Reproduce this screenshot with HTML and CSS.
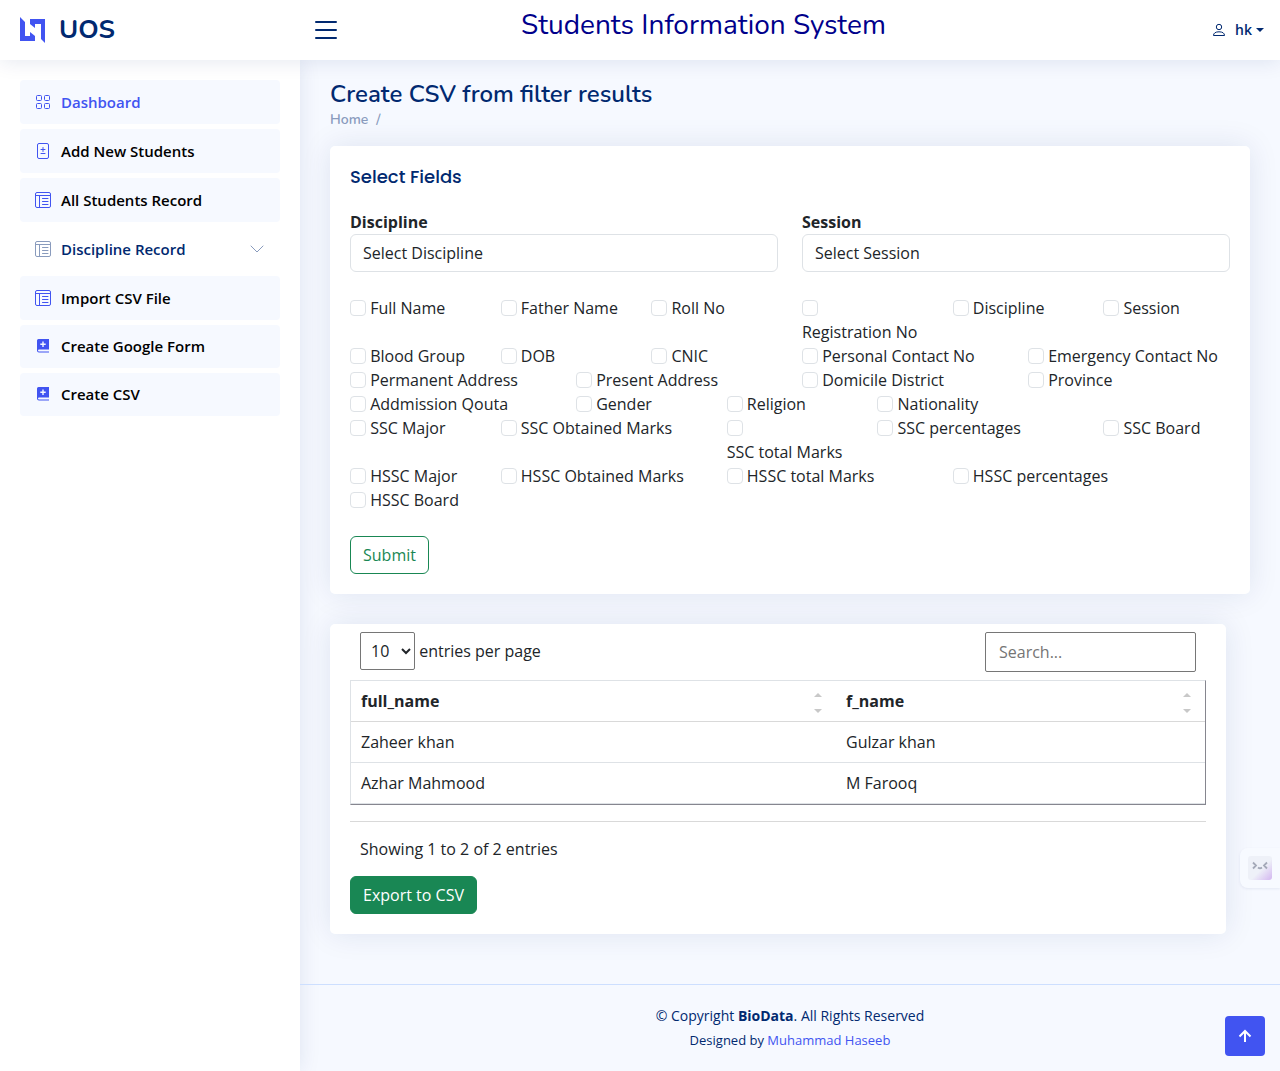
FILE: index.html
```html
<!DOCTYPE html>
<html lang="en">
<head>
<meta charset="utf-8">
<meta name="viewport" content="width=device-width, initial-scale=1">
<title>Students Information System</title>
<link rel="stylesheet" href="styles.css">
</head>
<body>
<svg class="sprite" aria-hidden="true">
  <symbol id="icon-window" viewBox="0 0 16 16">
    <rect x="0.5" y="0.5" width="15" height="15" rx="1.5" fill="none" stroke="currentColor"/>
    <path d="M0.5 3.5h15M4.5 3.5v12" fill="none" stroke="currentColor"/>
    <path d="M7.5 6.5h5.500M7.500 9.500h5.500M7.500 12.500h5.500" fill="none" stroke="currentColor" stroke-linecap="round"/>
  </symbol>
  <symbol id="icon-grid" viewBox="0 0 16 16">
    <g fill="none" stroke="currentColor"><rect x="1.500" y="1.500" width="5" height="5" rx="1"/><rect x="9.500" y="1.500" width="5" height="5" rx="1"/><rect x="1.500" y="9.500" width="5" height="5" rx="1"/><rect x="9.500" y="9.500" width="5" height="5" rx="1"/></g>
  </symbol>
  <symbol id="icon-file-diff" viewBox="0 0 16 16">
    <rect x="2.500" y="0.500" width="11" height="15" rx="1.500" fill="none" stroke="currentColor"/>
    <path d="M8 4.500v4M6 6.500h4M6 10.500h4" fill="none" stroke="currentColor" stroke-linecap="round"/>
  </symbol>
  <symbol id="icon-book-plus" viewBox="0 0 16 16">
    <path fill="currentColor" fill-rule="evenodd" d="M3.500 1H14v10.500H4a1 1 0 0 0 0 2h10v1H4a2 2 0 0 1-2-2v-10A1.500 1.500 0 0 1 3.500 1zM7.300 3.500v2h-2v1.400h2v2h1.400v-2h2v-1.400h-2v-2z"/>
  </symbol>
</svg>

<header class="header">
  <a class="brand" href="#">
    <svg class="brand-mark" viewBox="0 0 25 26" aria-hidden="true"><path fill="#4154f1" d="M0 0l5 5v14h5v-4l5 4v5H0zM10 2h15v24l-4-4V7h-6v4l-5-4z"/></svg>
    <span>UOS</span>
  </a>
  <button class="menu-toggle" type="button" aria-label="Toggle sidebar">
    <svg viewBox="0 0 22 18" aria-hidden="true"><path d="M1 1h20M1 9h20M1 17h20" stroke="currentColor" stroke-width="2" stroke-linecap="round"/></svg>
  </button>
  <div class="site-title">Students Information System</div>
  <a class="profile" href="#">
    <svg class="profile-icon" viewBox="0 0 14 14" aria-hidden="true"><g fill="none" stroke="currentColor"><circle cx="7" cy="4" r="2.700"/><path d="M1.500 12.500c0-2.400 2-3.700 5.500-3.700s5.500 1.300 5.500 3.700z" stroke-linejoin="round"/></g></svg>
    <span>hk</span>
    <span class="caret"></span>
  </a>
</header>

<div class="shell">
  <aside class="sidebar">
    <nav class="side-nav">
      <a class="side-link active" href="#"><svg class="icon"><use href="#icon-grid"/></svg>Dashboard</a>
      <a class="side-link" href="#"><svg class="icon"><use href="#icon-file-diff"/></svg>Add New Students</a>
      <a class="side-link" href="#"><svg class="icon"><use href="#icon-window"/></svg>All Students Record</a>
      <a class="side-link collapsed" href="#"><svg class="icon"><use href="#icon-window"/></svg>Discipline Record
        <svg class="chevron" viewBox="0 0 16 16" aria-hidden="true"><path d="M2 5l6 6 6-6" fill="none" stroke="currentColor" stroke-linecap="round" stroke-linejoin="round"/></svg></a>
      <a class="side-link" href="#"><svg class="icon"><use href="#icon-window"/></svg>Import CSV File</a>
      <a class="side-link compact" href="#"><svg class="icon"><use href="#icon-book-plus"/></svg>Create Google Form</a>
      <a class="side-link compact" href="#"><svg class="icon"><use href="#icon-book-plus"/></svg>Create CSV</a>
    </nav>
  </aside>

  <div class="page">
    <main class="main">
      <div class="page-title">
        <h1>Create CSV from filter results</h1>
        <nav class="breadcrumb"><a href="#">Home</a><span>/</span></nav>
      </div>

      <section class="card">
        <h2 class="card-title">Select Fields</h2>
        <form>
          <div class="row filters">
            <div class="col-6">
              <label class="field-label" for="discipline">Discipline</label>
              <select class="form-control" id="discipline"><option>Select Discipline</option></select>
            </div>
            <div class="col-6">
              <label class="field-label" for="session">Session</label>
              <select class="form-control" id="session"><option>Select Session</option></select>
            </div>
          </div>
          <div class="row">
            <div class="col-2"><input type="checkbox" id="f1"> <label for="f1">Full Name</label></div>
            <div class="col-2"><input type="checkbox" id="f2"> <label for="f2">Father Name</label></div>
            <div class="col-2"><input type="checkbox" id="f3"> <label for="f3">Roll No</label></div>
            <div class="col-2"><input type="checkbox" id="f4"> <label for="f4">Registration No</label></div>
            <div class="col-2"><input type="checkbox" id="f5"> <label for="f5">Discipline</label></div>
            <div class="col-2"><input type="checkbox" id="f6"> <label for="f6">Session</label></div>
          </div>
          <div class="row">
            <div class="col-2"><input type="checkbox" id="f7"> <label for="f7">Blood Group</label></div>
            <div class="col-2"><input type="checkbox" id="f8"> <label for="f8">DOB</label></div>
            <div class="col-2"><input type="checkbox" id="f9"> <label for="f9">CNIC</label></div>
            <div class="col-3"><input type="checkbox" id="f10"> <label for="f10">Personal Contact No</label></div>
            <div class="col-3"><input type="checkbox" id="f11"> <label for="f11">Emergency Contact No</label></div>
          </div>
          <div class="row">
            <div class="col-3"><input type="checkbox" id="f12"> <label for="f12">Permanent Address</label></div>
            <div class="col-3"><input type="checkbox" id="f13"> <label for="f13">Present Address</label></div>
            <div class="col-3"><input type="checkbox" id="f14"> <label for="f14">Domicile District</label></div>
            <div class="col-3"><input type="checkbox" id="f15"> <label for="f15">Province</label></div>
          </div>
          <div class="row">
            <div class="col-3"><input type="checkbox" id="f16"> <label for="f16">Addmission Qouta</label></div>
            <div class="col-2"><input type="checkbox" id="f17"> <label for="f17">Gender</label></div>
            <div class="col-2"><input type="checkbox" id="f18"> <label for="f18">Religion</label></div>
            <div class="col-2"><input type="checkbox" id="f19"> <label for="f19">Nationality</label></div>
          </div>
          <div class="row">
            <div class="col-2"><input type="checkbox" id="f20"> <label for="f20">SSC Major</label></div>
            <div class="col-3"><input type="checkbox" id="f21"> <label for="f21">SSC Obtained Marks</label></div>
            <div class="col-2"><input type="checkbox" id="f22"> <label for="f22">SSC total Marks</label></div>
            <div class="col-3"><input type="checkbox" id="f23"> <label for="f23">SSC percentages</label></div>
            <div class="col-2"><input type="checkbox" id="f24"> <label for="f24">SSC Board</label></div>
          </div>
          <div class="row">
            <div class="col-2"><input type="checkbox" id="f25"> <label for="f25">HSSC Major</label></div>
            <div class="col-3"><input type="checkbox" id="f26"> <label for="f26">HSSC Obtained Marks</label></div>
            <div class="col-3"><input type="checkbox" id="f27"> <label for="f27">HSSC total Marks</label></div>
            <div class="col-3"><input type="checkbox" id="f28"> <label for="f28">HSSC percentages</label></div>
            <div class="col-2"><input type="checkbox" id="f29"> <label for="f29">HSSC Board</label></div>
          </div>
          <button class="btn btn-outline" type="submit">Submit</button>
        </form>
      </section>

      <section class="card results">
        <div class="table-top">
          <label class="per-page"><select class="per-page-select"><option>10</option></select> entries per page</label>
          <input class="search" type="search" placeholder="Search..." aria-label="Search">
        </div>
        <div class="table-wrap">
          <table class="data-table">
            <thead>
              <tr>
                <th class="name-col"><a class="sorter" href="#">full_name<span class="sort-arrows"></span></a></th>
                <th><a class="sorter" href="#">f_name<span class="sort-arrows"></span></a></th>
              </tr>
            </thead>
            <tbody>
              <tr><td>Zaheer khan</td><td>Gulzar khan</td></tr>
              <tr><td>Azhar Mahmood</td><td>M Farooq</td></tr>
            </tbody>
          </table>
        </div>
        <div class="table-info">Showing 1 to 2 of 2 entries</div>
        <button class="btn btn-success" type="button">Export to CSV</button>
      </section>
    </main>

    <footer class="footer">
      <div class="copyright">© Copyright <strong>BioData</strong>. All Rights Reserved</div>
      <div class="credits">Designed by <a href="#">Muhammad Haseeb</a></div>
    </footer>
  </div>
</div>

<div class="assistant" aria-hidden="true">
  <div class="assistant-face">
    <svg viewBox="0 0 24 24"><path d="M5 6.500l3 3-3 3M19 6.500l-3 3 3 3M10 11.500q2 1.500 4 0" fill="none" stroke="#a4a9b8" stroke-width="1.800"/></svg>
  </div>
</div>
<a class="back-to-top" href="#" aria-label="Back to top">
  <svg viewBox="0 0 24 24" aria-hidden="true"><path d="M12 18V7M6.500 12.500L12 7l5.500 5.500" fill="none" stroke="#fff" stroke-width="2"/></svg>
</a>
</body>
</html>
```
FILE: styles.css
```css
* { box-sizing: border-box; }

body {
  margin: 0;
  background: #f6f9ff;
  color: #212529;
  font: 400 16px/24px "Open Sans", "Noto Sans", sans-serif;
}

a { color: #4154f1; text-decoration: none; }
h1, h2 { margin: 0; }
.sprite { display: none; }

/* Header */
.header {
  position: sticky;
  top: 0;
  z-index: 3;
  display: flex;
  align-items: center;
  height: 60px;
  padding: 0 16px 0 20px;
  background: #fff;
  box-shadow: 0 2px 20px rgba(1, 41, 112, 0.1);
}
.brand {
  display: flex;
  align-items: center;
  gap: 14px;
  width: 295px;
  color: #012970;
  font: 700 26px/32px Nunito, Lato, sans-serif;
}
.brand-mark { width: 25px; height: 26px; }
.menu-toggle {
  display: flex;
  padding: 0;
  border: 0;
  background: none;
  color: #012970;
}
.menu-toggle svg { width: 22px; height: 18px; }
.site-title {
  align-self: flex-start;
  margin: 8px auto 0 184px;
  color: #00008b;
  font: 400 28px/34px Nunito, Lato, sans-serif;
  white-space: nowrap;
}
.profile {
  display: flex;
  align-items: center;
  color: #012970;
  font-size: 14px;
  font-weight: 600;
}
.profile-icon { width: 14px; height: 14px; margin-right: 9px; }
.caret {
  margin-left: 4px;
  border: 4px solid transparent;
  border-top-color: currentColor;
  border-bottom: 0;
}

/* Shell and sidebar */
.shell { display: flex; min-height: calc(100vh - 60px); }
.sidebar {
  flex: none;
  width: 300px;
  padding: 20px;
  background: #fff;
  box-shadow: 0 0 20px rgba(1, 41, 112, 0.1);
}
.side-nav { display: flex; flex-direction: column; gap: 5px; }
.side-link {
  display: flex;
  align-items: center;
  height: 44px;
  padding: 0 15px;
  border-radius: 4px;
  background: #f6f9ff;
  color: #000;
  font-size: 15px;
  font-weight: 600;
}
.side-link.compact { height: 43px; padding-bottom: 1px; }
.side-link.active { color: #4154f1; }
.side-link.collapsed { background: #fff; color: #012970; }
.icon { width: 16px; height: 16px; margin-right: 10px; color: #4154f1; }
.collapsed .icon, .chevron { color: #899bbd; }
.chevron { width: 16px; height: 16px; margin-left: auto; }

/* Page content */
.page { display: flex; flex: 1; flex-direction: column; min-width: 0; }
.main { flex: 1; padding: 20px 30px; }
.page-title { padding-bottom: 16px; }
.page-title h1 {
  color: #012970;
  font: 600 24px/29px Nunito, Lato, sans-serif;
}
.breadcrumb {
  display: flex;
  gap: 8px;
  color: #899bbd;
  font: 600 14px/21px Nunito, Lato, sans-serif;
}
.breadcrumb a { color: inherit; }
.card {
  margin-bottom: 30px;
  padding: 0 20px 20px;
  border-radius: 5px;
  background: #fff;
  box-shadow: 0 0 30px rgba(1, 41, 112, 0.1);
}
.card-title {
  padding: 20px 0 23px;
  color: #012970;
  font: 500 18px/22px Poppins, Inter, sans-serif;
}

/* Form grid */
.row { display: flex; flex-wrap: wrap; margin: 0 -12px; }
.row > div { padding: 0 12px; }
.row label { display: inline-block; white-space: nowrap; }
.col-2 { width: calc(100% / 6); }
.col-3 { width: 25%; }
.col-6 { width: 50%; }
.filters { margin-bottom: 24px; }
.filters .field-label { display: block; margin-top: -1px; font-weight: 700; }
.form-control {
  display: block;
  width: 100%;
  height: 38px;
  padding: 0 12px;
  border: 1px solid #dee2e6;
  border-radius: 6px;
  background: #fff;
  color: #212529;
  font: inherit;
  appearance: none;
}
input[type="checkbox"] {
  width: 16px;
  height: 16px;
  margin: 0;
  border: 1px solid #dee2e6;
  border-radius: 4px;
  background: #fff;
  vertical-align: -2px;
  appearance: none;
}
.btn {
  height: 38px;
  padding: 0 12px;
  border: 1px solid #198754;
  border-radius: 6px;
  font: inherit;
}
.btn-outline { display: block; margin-top: 24px; background: #fff; color: #198754; }
.btn-success { display: block; background: #198754; color: #fff; }

/* Results table */
.results { margin-right: 24px; }
.table-top {
  display: flex;
  align-items: flex-start;
  justify-content: space-between;
  padding: 8px 10px;
}
.per-page-select {
  width: 55px;
  height: 38px;
  padding: 0 6px;
  border: 1px solid #767676;
  border-radius: 2px;
  background: #fff;
  color: #212529;
  font: inherit;
}
.search {
  width: 211px;
  height: 40px;
  padding: 0 13px;
  border: 1px solid #767676;
  border-radius: 2px;
  color: #212529;
  font: inherit;
  appearance: none;
}
.search::placeholder { color: #757575; }
.table-wrap { padding-bottom: 16px; border-bottom: 1px solid #d9d9d9; }
.data-table {
  width: 100%;
  border: 1px solid #dee2e6;
  border-right-color: #86868f;
  border-bottom-color: #86868f;
  border-spacing: 0;
  table-layout: fixed;
}
.data-table th, .data-table td {
  padding: 8px 10px;
  border-bottom: 1px solid #dee2e6;
  text-align: left;
}
.data-table th { border-bottom-color: #d9d9d9; }
.name-col { width: 485px; }
.sorter {
  display: flex;
  align-items: center;
  justify-content: space-between;
  color: #212529;
}
.sort-arrows {
  display: flex;
  flex-direction: column;
  gap: 12px;
  padding-top: 3px;
  margin-right: 4px;
}
.sort-arrows::before, .sort-arrows::after {
  border: 4px solid transparent;
  content: "";
}
.sort-arrows::before { border-top: 0; border-bottom-color: #c8c8c8; }
.sort-arrows::after { border-bottom: 0; border-top-color: #c8c8c8; }
.table-info { padding: 15px 10px; }

/* Footer */
.footer {
  padding: 20px 0;
  border-top: 1px solid #cddfff;
  color: #012970;
  text-align: center;
}
.copyright { font-size: 14px; line-height: 21px; }
.credits { padding: 4px 0 1px; font-size: 13px; line-height: 20px; }

/* Floating controls */
.assistant {
  position: fixed;
  top: 848px;
  right: 0;
  padding: 8px;
  border-radius: 8px 0 0 8px;
  background: #f7faff;
  box-shadow: 0 1px 3px rgba(1, 41, 112, 0.08);
}
.assistant-face {
  width: 24px;
  height: 24px;
  border-radius: 3px;
  background: linear-gradient(135deg, #eef1f8 55%, #d3b6f0);
}
.assistant-face svg { display: block; }
.back-to-top {
  position: fixed;
  right: 15px;
  bottom: 15px;
  display: grid;
  place-items: center;
  width: 40px;
  height: 40px;
  border-radius: 4px;
  background: #4154f1;
}
.back-to-top svg { width: 24px; height: 24px; }
```
